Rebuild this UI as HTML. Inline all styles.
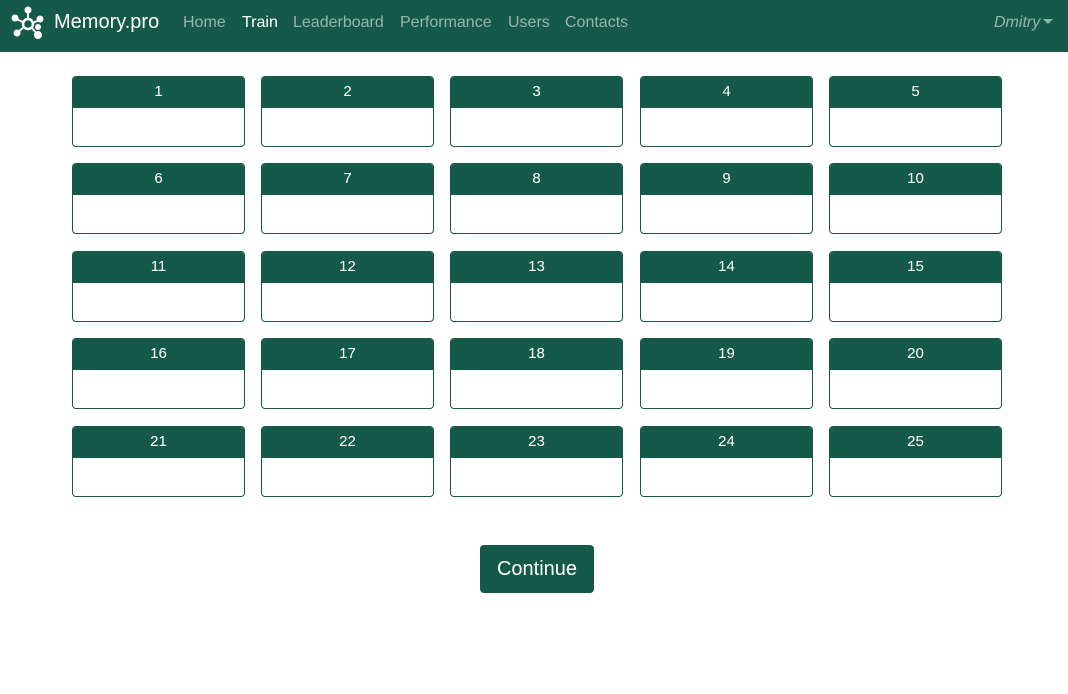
<!DOCTYPE html>
<html><head><style>
body{margin:0;font-family:"Liberation Sans",sans-serif;background:#fff;width:1068px;height:694px;position:relative;overflow:hidden}
.nav{position:absolute;left:0;top:0;width:1068px;height:52px;background:#155a48}
.brand{position:absolute;left:54px;top:11px;color:#fff;font-size:20px}
.link{position:absolute;top:14px;font-size:16px;color:rgba(255,255,255,.55)}
.card{position:absolute;width:171px;height:69px;border:1px solid #155a48;border-radius:4px;overflow:hidden}
.card .h{height:31px;background:#155a48;color:#fff;font-size:15px;text-align:center;line-height:30px}
.btn{position:absolute;left:480px;top:545px;width:114px;height:48px;background:#155a48;color:#fff;border-radius:4px;font-size:20px;text-align:center;line-height:48px}
</style></head><body>
<div class="nav">
<svg style="position:absolute;left:11px;top:6px" width="34" height="34" viewBox="0 0 34 34" fill="#fff" stroke="#fff" stroke-width="2">
<circle cx="17" cy="18" r="5" fill="none" stroke-width="2.5"/>
<line x1="17" y1="13" x2="17" y2="5"/><circle cx="17" cy="4" r="2.5"/>
<line x1="12" y1="16" x2="5" y2="13"/><circle cx="4" cy="12" r="2.5"/>
<line x1="13" y1="21" x2="7" y2="26"/><circle cx="6" cy="27" r="2.5"/>
<line x1="21" y1="22" x2="26" y2="28"/><circle cx="27" cy="29" r="3"/>
<line x1="22" y1="17" x2="28" y2="14"/><circle cx="29" cy="13" r="2.5"/>
<circle cx="27" cy="21" r="2"/>
</svg>
<div class="brand">Memory.pro</div>
<div class="link" style="left:183px">Home</div>
<div class="link" style="left:242px;color:#fff">Train</div>
<div class="link" style="left:293px">Leaderboard</div>
<div class="link" style="left:400px">Performance</div>
<div class="link" style="left:508px">Users</div>
<div class="link" style="left:565px">Contacts</div>
<div class="link" style="left:994px;font-style:italic">Dmitry <span style="display:inline-block;width:0;height:0;border-left:5px solid transparent;border-right:5px solid transparent;border-top:5px solid rgba(255,255,255,.55);vertical-align:3px;margin-left:-2px"></span></div>
</div>
<div class="card" style="left:72px;top:76px"><div class="h">1</div></div>
<div class="card" style="left:261px;top:76px"><div class="h">2</div></div>
<div class="card" style="left:450px;top:76px"><div class="h">3</div></div>
<div class="card" style="left:640px;top:76px"><div class="h">4</div></div>
<div class="card" style="left:829px;top:76px"><div class="h">5</div></div>
<div class="card" style="left:72px;top:163px"><div class="h">6</div></div>
<div class="card" style="left:261px;top:163px"><div class="h">7</div></div>
<div class="card" style="left:450px;top:163px"><div class="h">8</div></div>
<div class="card" style="left:640px;top:163px"><div class="h">9</div></div>
<div class="card" style="left:829px;top:163px"><div class="h">10</div></div>
<div class="card" style="left:72px;top:251px"><div class="h">11</div></div>
<div class="card" style="left:261px;top:251px"><div class="h">12</div></div>
<div class="card" style="left:450px;top:251px"><div class="h">13</div></div>
<div class="card" style="left:640px;top:251px"><div class="h">14</div></div>
<div class="card" style="left:829px;top:251px"><div class="h">15</div></div>
<div class="card" style="left:72px;top:338px"><div class="h">16</div></div>
<div class="card" style="left:261px;top:338px"><div class="h">17</div></div>
<div class="card" style="left:450px;top:338px"><div class="h">18</div></div>
<div class="card" style="left:640px;top:338px"><div class="h">19</div></div>
<div class="card" style="left:829px;top:338px"><div class="h">20</div></div>
<div class="card" style="left:72px;top:426px"><div class="h">21</div></div>
<div class="card" style="left:261px;top:426px"><div class="h">22</div></div>
<div class="card" style="left:450px;top:426px"><div class="h">23</div></div>
<div class="card" style="left:640px;top:426px"><div class="h">24</div></div>
<div class="card" style="left:829px;top:426px"><div class="h">25</div></div>
<div class="btn">Continue</div>
</body></html>
